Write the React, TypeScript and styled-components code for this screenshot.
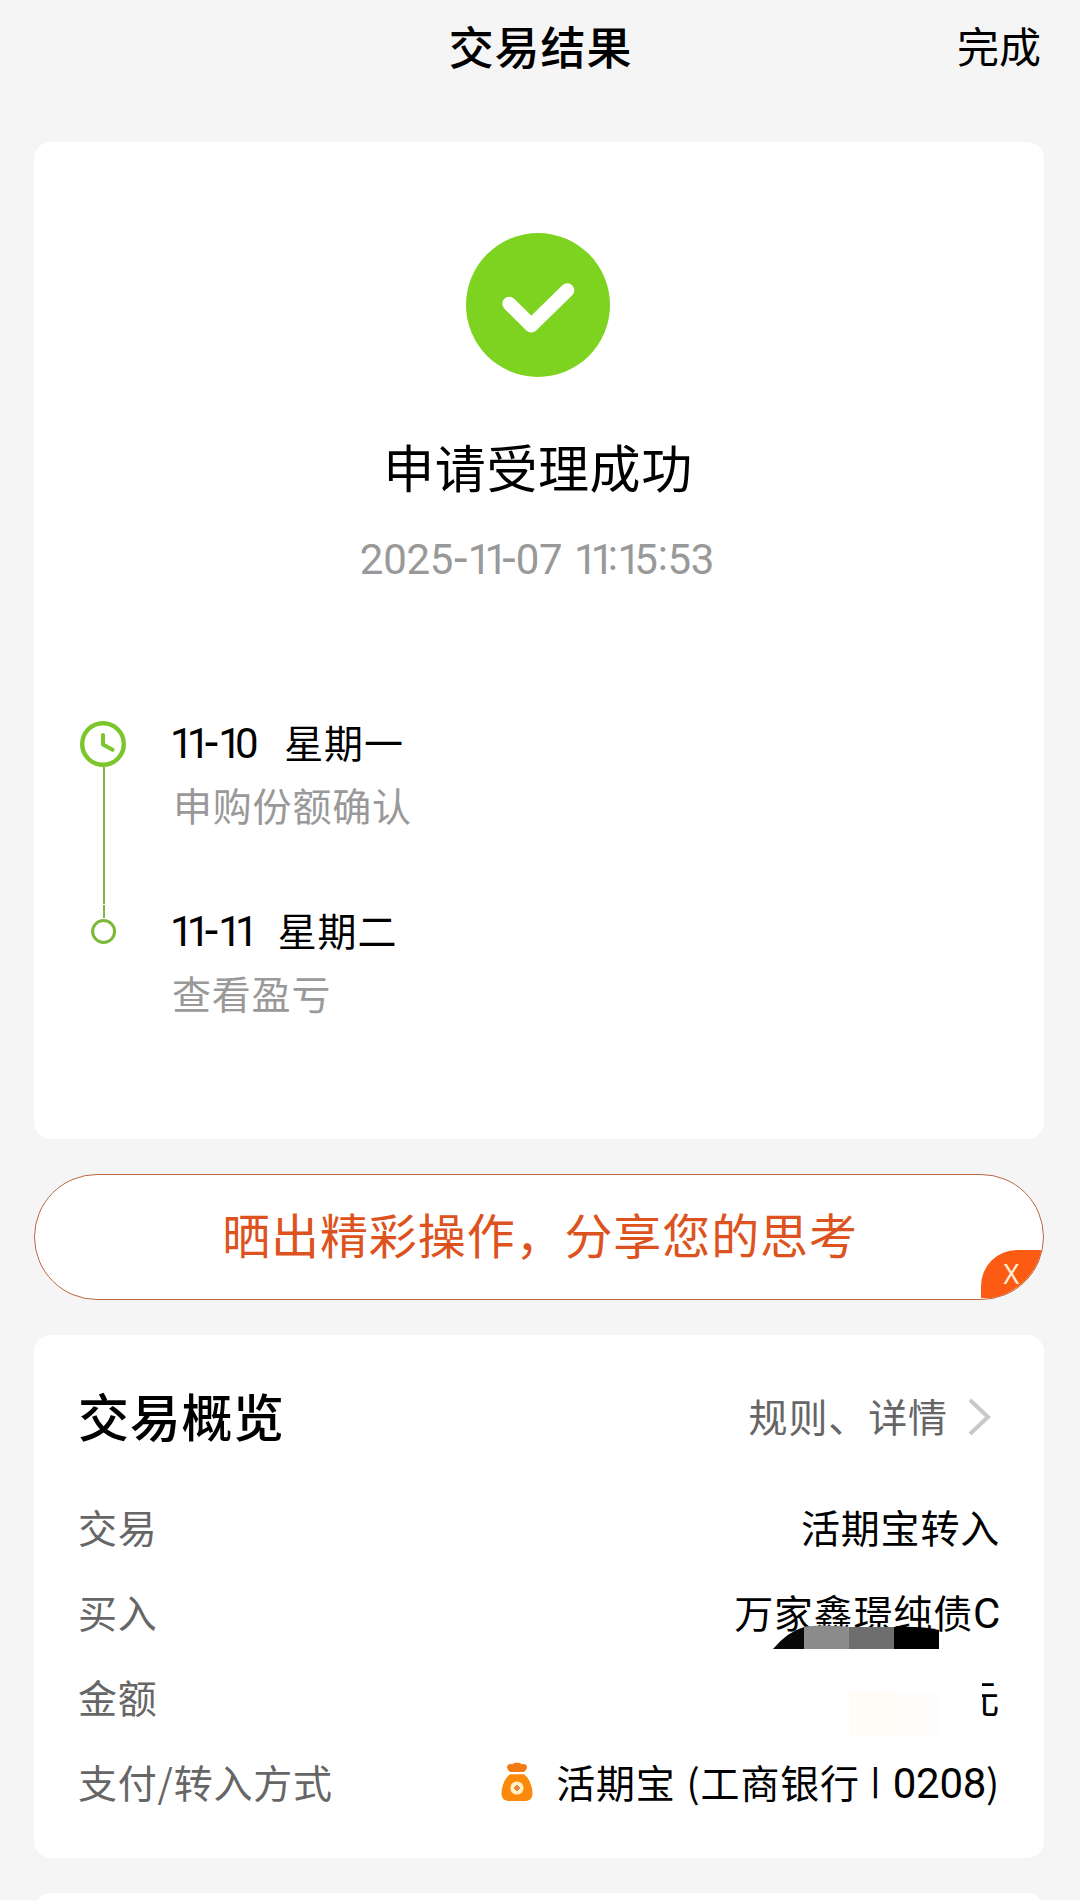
import React from "react";
import styled, { createGlobalStyle } from "styled-components";

const Global = createGlobalStyle`
  * { box-sizing: border-box; }
  html, body { margin: 0; padding: 0; background: #f5f5f5; }
  body { font-family: "Noto Sans CJK SC", sans-serif; color: #000; }
`;

const Screen = styled.main`
  width: 1080px;
  height: 1900px;
  overflow: hidden;
  background: #f5f5f5;
  padding: 0 36px 0 34px;
  display: flex;
  flex-direction: column;
`;

const Header = styled.header`
  height: 142px;
  flex: none;
  display: grid;
  grid-template-columns: 1fr auto 1fr;
  align-items: start;
  padding: 15px 0 0 3px;
  margin-right: 3px;
`;

const Title = styled.h1`
  grid-column: 2;
  margin: 0 0 0 3px;
  font-size: 45px;
  line-height: 62px;
  font-weight: 500;
  letter-spacing: 0.9px;
`;

const Done = styled.button`
  justify-self: end;
  border: 0;
  padding: 0;
  background: none;
  font: inherit;
  font-size: 42px;
  line-height: 60px;
`;

const Card = styled.section<{ $height: number }>`
  flex: none;
  height: ${(p) => p.$height}px;
  background: #fff;
  border-radius: 17px;
`;

const ResultCard = styled(Card)`
  padding: 91px 39px 0 37px;
  display: flex;
  flex-direction: column;
  align-items: center;
`;

const Status = styled.h2`
  margin: 54px 0 0;
  font-size: 51px;
  line-height: 70px;
  font-weight: 400;
  letter-spacing: 0.6px;
`;

const Num = styled.span`
  font-family: Roboto, sans-serif;
  font-size: 42px;
  line-height: 1;
  letter-spacing: -0.3px;
  word-spacing: 1.5px;
`;

const One = styled.span`
  letter-spacing: -6.8px;
`;

const Dash = styled.span`
  position: relative;
  top: 1px;
  font-size: 49px;
  line-height: 0;
  letter-spacing: 0;
  margin-left: 1px;
`;

const Colon = styled.span`
  position: relative;
  top: -4px;
`;

const Time = styled.p`
  margin: 36px 2px 0 0;
  height: 60px;
  line-height: 60px;
  color: #999;
  white-space: pre;
`;

const Timeline = styled.ol`
  list-style: none;
  align-self: stretch;
  margin: 117px 0 0;
  padding: 0;
`;

const Step = styled.li`
  height: 188px;
  display: flex;
`;

const Rail = styled.div<{ $top: number }>`
  width: 65px;
  margin-left: 7px;
  padding-top: ${(p) => p.$top}px;
  display: flex;
  flex-direction: column;
  flex: none;
  margin-right: 29px;
  svg { display: block; flex: none; }
`;

const Line = styled.i<{ $length: number }>`
  flex: none;
  width: 2px;
  height: ${(p) => p.$length}px;
  margin-left: 25px;
  background: #80b548;
`;

const StepText = styled.div`
  margin-top: -4px;
  font-size: 39px;
  line-height: 63px;
  letter-spacing: 0.8px;
  white-space: nowrap;
`;

const StepDay = styled.div`
  display: flex;
  align-items: baseline;
  gap: 26px;
  height: 63px;
  margin-left: -2px;
`;

const StepNote = styled.div<{ $indent?: number }>`
  color: #999;
  padding-left: ${(p) => p.$indent ?? 0}px;
`;

const Share = styled.button`
  position: relative;
  overflow: hidden;
  flex: none;
  height: 126px;
  margin: 35px 0;
  border: 1px solid #b9683f;
  border-radius: 63px;
  padding: 0 0 9px 2px;
  background: #fff;
  color: #dd5320;
  font: inherit;
  font-size: 48px;
  letter-spacing: 0.9px;
  line-height: 112px;
`;

const Close = styled.span`
  position: absolute;
  right: 0;
  bottom: 1px;
  width: 62px;
  height: 48px;
  border-top-left-radius: 36px;
  background: #fb5b12;
  color: #ffeedd;
  font: 27px/48px "Noto Sans", sans-serif;
  letter-spacing: 0;
  padding-right: 1px;
`;

const Overview = styled(Card)`
  padding: 45px 44px 0 44px;
`;

const OverviewHead = styled.div`
  display: flex;
  align-items: center;
  height: 70px;
`;

const OverviewTitle = styled.h2`
  margin: 0;
  flex: 1;
  font-size: 51px;
  line-height: 70px;
  font-weight: 500;
  letter-spacing: 0.7px;
`;

const Rules = styled.a`
  display: flex;
  align-items: center;
  gap: 20px;
  margin-right: 8px;
  color: #666;
  font-size: 39px;
  letter-spacing: 0.9px;
  svg { margin-top: 4px; }
`;

const Row = styled.div`
  height: 85px;
  display: flex;
  align-items: center;
  justify-content: space-between;
  font-size: 39px;
  letter-spacing: 0.8px;
  white-space: nowrap;
`;

const Rows = styled.div`
  margin-top: 33px;
`;

const Label = styled.span`
  color: #666;
`;

const Value = styled.span`
  position: relative;
  display: flex;
  align-items: center;
`;

const FundName = styled.span`
  display: flex;
  align-items: baseline;
`;

const Mosaic = styled.svg`
  position: absolute;
  right: 61px;
  top: 42px;
`;

const Redaction = styled.i`
  position: absolute;
  right: 18px;
  top: 0;
  width: 160px;
  height: 76px;
  background: #fff;
`;

const Tint = styled.i<{ $right: number; $color: string }>`
  position: absolute;
  right: ${(p) => p.$right}px;
  top: 24px;
  width: 45px;
  height: 45px;
  background: ${(p) => p.$color};
`;

const Account = styled.span`
  display: flex;
  align-items: baseline;
  margin-left: 23px;
`;

const Spaced = styled.span<{ $left: number }>`
  margin-left: ${(p) => p.$left}px;
`;

const Bar = styled.span`
  font: 500 37px/1 Roboto, sans-serif;
  position: relative;
  top: -5px;
  margin: 0 12px 0 11px;
`;

const BagSvg = styled.svg`
  margin-top: 2px;
`;

const NextCard = styled(Card)`
  margin-top: 35px;
`;

const Digits = ({ children }: { children: string }) => (
  <Num>
    {[...children].map((c, i) => {
      if (c === "1") return <One key={i}>{c}</One>;
      if (c === "-") return <Dash key={i}>{c}</Dash>;
      if (c === ":") return <Colon key={i}>{c}</Colon>;
      return c;
    })}
  </Num>
);

const SuccessIcon = () => (
  <svg width="144" height="144" viewBox="0 0 144 144">
    <circle cx="72" cy="72" r="72" fill="#7ed321" />
    <path d="M43.3 70.7 65.3 92.5 101.3 57.3" fill="none" stroke="#fff" strokeWidth="14" strokeLinecap="round" strokeLinejoin="round" />
  </svg>
);

const ClockIcon = () => (
  <svg width="50" height="46" viewBox="0 0 50 46">
    <circle cx="25" cy="23" r="20.8" fill="none" stroke="#7cc62c" strokeWidth="4.4" />
    <path d="M25 14v9.6l9.6 5.2" fill="none" stroke="#7cc62c" strokeWidth="4" strokeLinecap="round" strokeLinejoin="round" />
  </svg>
);

const DotIcon = () => (
  <svg width="50" height="27" viewBox="0 0 50 27">
    <circle cx="25.6" cy="13.5" r="11" fill="none" stroke="#7cb93a" strokeWidth="3" />
  </svg>
);

const Chevron = () => (
  <svg width="24" height="40" viewBox="0 0 24 40">
    <path d="M2 3 20 20 2 37" fill="none" stroke="#c8c8c8" strokeWidth="4" />
  </svg>
);

const MoneyBag = () => (
  <BagSvg width="32" height="40" viewBox="0 0 32 40">
    <path d="M9 10C8 8.500 6 7.500 6 5.200 6 2.500 9 1.200 11 2.400 12.500.2 19.500.2 21 2.400 23 1.200 26 2.500 26 5.200 26 7.500 24 8.500 23 10Z" fill="#f47a14" />
    <path d="M9 12.200h14C28 16 31.500 24 31.500 31c0 6-3 8-8 8h-15c-5 0-8-2-8-8C.5 24 4 16 9 12.200Z" fill="#fb8a0c" />
    <circle cx="16" cy="26" r="6.600" fill="#fff0c4" />
    <path d="m16 23 3 3-3 3-3-3Z" fill="#d98a48" stroke="#d98a48" strokeLinejoin="round" />
  </BagSvg>
);

export default function App() {
  return (
    <>
      <Global />
      <Screen>
        <Header>
          <Title>交易结果</Title>
          <Done>完成</Done>
        </Header>

        <ResultCard $height={997}>
          <SuccessIcon />
          <Status>申请受理成功</Status>
          <Time><Digits>2025-11-07 11:15:53</Digits></Time>
          <Timeline>
            <Step>
              <Rail $top={7}>
                <ClockIcon />
                <Line $length={137} />
              </Rail>
              <StepText>
                <StepDay><Digits>11-10</Digits>星期一</StepDay>
                <StepNote $indent={1}>申购份额确认</StepNote>
              </StepText>
            </Step>
            <Step>
              <Rail $top={3}>
                <Line $length={13} />
                <DotIcon />
              </Rail>
              <StepText>
                <StepDay><Digits>11-11</Digits>星期二</StepDay>
                <StepNote>查看盈亏</StepNote>
              </StepText>
            </Step>
          </Timeline>
        </ResultCard>

        <Share>
          晒出精彩操作，分享您的思考
          <Close>X</Close>
        </Share>

        <Overview $height={523}>
          <OverviewHead>
            <OverviewTitle>交易概览</OverviewTitle>
            <Rules>规则、详情<Chevron /></Rules>
          </OverviewHead>
          <Rows>
            <Row>
              <Label>交易</Label>
              <Value>活期宝转入</Value>
            </Row>
            <Row>
              <Label>买入</Label>
              <Value>
                <FundName>万家鑫璟纯债<Num>C</Num></FundName>
                <Mosaic width="166" height="24" viewBox="0 0 166 24">
                  <path d="M0 24Q14 7 31 2V24Z" fill="#080808" />
                  <path d="M31 2Q45-1 76 2V24H31Z" fill="#8c8c8c" />
                  <path d="M76 2H121V24H76Z" fill="#6e6e6e" />
                  <path d="M121 2Q150 1 166 5V24H121Z" fill="#000" />
                </Mosaic>
              </Value>
            </Row>
            <Row>
              <Label>金额</Label>
              <Value>
                元
                <Redaction />
                <Tint $right={106} $color="#fffcf7" />
                <Tint $right={61} $color="#fffdfc" />
              </Value>
            </Row>
            <Row>
              <Label>支付/转入方式</Label>
              <Value>
                <MoneyBag />
                <Account>
                  活期宝<Spaced $left={11}>(工商银行</Spaced>
                  <Bar>|</Bar>
                  <Num>0208</Num>)
                </Account>
              </Value>
            </Row>
          </Rows>
        </Overview>
        <NextCard $height={100} />
      </Screen>
    </>
  );
}
